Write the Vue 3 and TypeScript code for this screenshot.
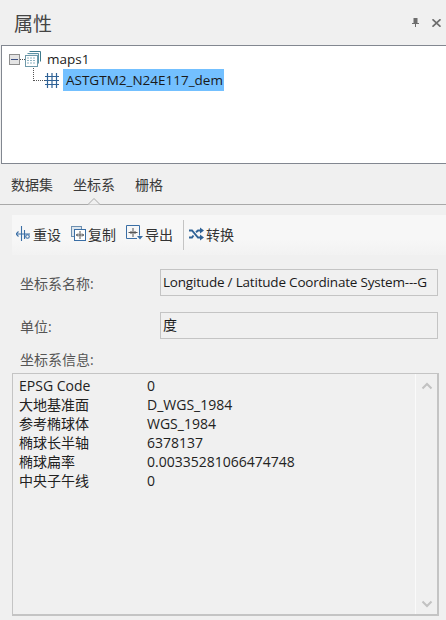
<template>
  <div class="panel">
    <header class="title-bar">
      <h1>属性</h1>
      <div class="window-tools">
        <svg width="7" height="9" viewBox="0 0 7 9" aria-label="固定">
          <path d="M1.500 0h4v5.500h-4z" fill="#6d6d6d" />
          <path d="M0 5.500h7" stroke="#6d6d6d" />
          <path d="M3.500 6v3" stroke="#6d6d6d" />
        </svg>
        <svg width="9" height="8" viewBox="0 0 9 8" aria-label="关闭">
          <path d="M.5 .3l8 7.400M8.500 .3l-8 7.400" stroke="#6d6d6d" stroke-width="1.700" fill="none" />
        </svg>
      </div>
    </header>

    <section class="tree">
      <div class="tree-root">
        <span class="collapse"><i></i></span>
        <span class="dots-h"></span>
        <svg class="map-icon" width="16" height="16" viewBox="0 0 16 16">
          <path d="M4.500 .5h11v10" fill="none" stroke="#3f7a8c" />
          <path d="M2.500 2.500h11v10" fill="#e8f1f4" stroke="#5b93a6" />
          <rect x=".5" y="4.500" width="12" height="11" fill="#fff" stroke="#6f9aaa" />
          <path d="M2 7h9M2 9.500h9M2 12h9" stroke="#8fb4c2" stroke-dasharray="2 1" />
        </svg>
        <span class="root-name">maps1</span>
      </div>
      <div class="tree-child">
        <span class="dots-l"></span>
        <svg width="14" height="15" viewBox="0 0 14 15">
          <path d="M0 3.500h14M0 7.500h14M0 11.500h14M2.500 0v15M7 0v15M11.500 0v15" stroke="#2f6296" stroke-width="1.200" />
        </svg>
        <span class="selected">ASTGTM2_N24E117_dem</span>
      </div>
    </section>

    <nav class="tabs">
      <a v-for="tab in tabs" :key="tab" class="tab">{{ tab }}</a>
      <svg class="tab-notch" width="14" height="8" viewBox="0 0 14 8">
        <path d="M0 7.500h1l6-6 6 6h1" fill="#f0f0f0" stroke="#a9a9a9" />
      </svg>
    </nav>

    <div class="toolbar">
      <button type="button" class="tool">
        <svg width="15" height="16" viewBox="0 0 15 16" fill="none" stroke="#3a6ea5" stroke-width="1.100">
          <path d="M5.500 0v15M8.500 4v9M0 8h14" />
          <path d="M0 8l2.500-2.500M0 8l2.500 2.500" />
          <circle cx="11.500" cy="10.500" r="1.800" />
        </svg>
        重设
      </button>
      <button type="button" class="tool">
        <svg width="15" height="15" viewBox="0 0 15 15" fill="none">
          <rect x=".5" y=".5" width="10" height="10" fill="#dde6ee" stroke="#6d8fb0" />
          <rect x="3.500" y="3.500" width="11" height="11" fill="#fff" stroke="#3a6ea5" />
          <path d="M9 5v8M5 9h8" stroke="#555" />
          <path d="M7 7.500l-1.500 1.500 1.500 1.500M11 7.500l1.500 1.500-1.500 1.500" stroke="#555" />
        </svg>
        复制
      </button>
      <button type="button" class="tool">
        <svg width="17" height="17" viewBox="0 0 17 17" fill="none">
          <path d="M11 13.500H.5V.5h13v10" stroke="#3a6ea5" />
          <path d="M7 3v9M2.500 7.500h9" stroke="#555" />
          <path d="M5.500 6l-1.500 1.500 1.500 1.500M8.500 6l1.500 1.500-1.500 1.500" stroke="#555" />
          <path d="M11 11h6l-3 3.500z" fill="#3a6ea5" />
        </svg>
        导出
      </button>
      <span class="tool-sep"></span>
      <button type="button" class="tool">
        <svg width="15" height="14" viewBox="0 0 15 14" fill="none" stroke="#2f6296" stroke-width="1.900">
          <path d="M0 3.500h3l6 7h3M0 10.500h3l1.500-2M7 5.200l2-1.700h3" />
          <path d="M11 .5l4 3-4 3zM11 7.500l4 3-4 3z" fill="#2f6296" stroke="none" />
        </svg>
        转换
      </button>
    </div>

    <div class="field">
      <label>坐标系名称:</label>
      <div class="field-box">Longitude / Latitude Coordinate System---G</div>
    </div>
    <div class="field unit">
      <label>单位:</label>
      <div class="field-box">度</div>
    </div>

    <div class="info-label">坐标系信息:</div>
    <section class="info">
      <div class="info-rows">
        <div v-for="row in rows" :key="row.name" class="info-row">
          <span>{{ row.name }}</span>
          <span>{{ row.value }}</span>
        </div>
      </div>
      <div class="scrollbar">
        <svg width="12" height="8" viewBox="0 0 12 8">
          <path d="M1.500 6.500L6 2l4.500 4.500" fill="none" stroke="#c2c2c2" stroke-width="2" />
        </svg>
        <svg width="12" height="8" viewBox="0 0 12 8">
          <path d="M1.500 1.500L6 6l4.500-4.500" fill="none" stroke="#c2c2c2" stroke-width="2" />
        </svg>
      </div>
    </section>
  </div>
</template>

<script setup lang="ts">
const tabs = ["数据集", "坐标系", "栅格"];

const rows = [
  { name: "EPSG Code", value: "0" },
  { name: "大地基准面", value: "D_WGS_1984" },
  { name: "参考椭球体", value: "WGS_1984" },
  { name: "椭球长半轴", value: "6378137" },
  { name: "椭球扁率", value: "0.00335281066474748" },
  { name: "中央子午线", value: "0" },
];
</script>

<style>
html,
body {
  margin: 0;
  background: #f0f0f0;
}
</style>

<style scoped>
.panel {
  width: 446px;
  height: 620px;
  overflow: hidden;
  background: #f0f0f0;
  color: #1a1a1a;
  font-family: "Open Sans", "Noto Sans CJK SC", sans-serif;
  font-size: 14px;
  box-sizing: border-box;
}

.title-bar {
  height: 45px;
  display: flex;
  align-items: center;
  justify-content: space-between;
  padding: 0 5px 0 14px;
  box-sizing: border-box;
}

h1 {
  margin: 0;
  font-size: 19px;
  font-weight: 400;
  color: #444;
}

.window-tools {
  display: flex;
  align-items: center;
  gap: 13px;
}

.tree {
  height: 119px;
  margin-left: 1px;
  border: 1px solid #828790;
  border-right: 0;
  background: #fff;
  padding: 3px 0 0 7px;
  box-sizing: border-box;
  font-size: 13.5px;
}

.tree-root {
  display: flex;
  align-items: center;
  height: 20px;
}

.tree-child {
  display: flex;
  align-items: center;
  height: 22px;
  padding-left: 36px;
  position: relative;
}

.collapse {
  width: 11px;
  height: 11px;
  border: 1px solid #8e8e8e;
  background: #e4e4e4;
  display: flex;
  align-items: center;
  justify-content: center;
  box-sizing: border-box;
}

.collapse i {
  width: 7px;
  height: 1px;
  background: #3b4f82;
}

.dots-h {
  width: 5px;
  border-top: 1px dotted #555;
}

.root-name {
  margin-left: 6px;
}

.dots-l {
  position: absolute;
  left: 24px;
  top: -1px;
  width: 11px;
  height: 12px;
  border-left: 1px dotted #555;
  border-bottom: 1px dotted #555;
}

.selected {
  margin-left: 4px;
  padding: 0 1px 0 3px;
  height: 22px;
  line-height: 22px;
  background: #73c0ff;
}

.tabs {
  position: relative;
  height: 41px;
  display: flex;
  align-items: center;
  gap: 20px;
  padding: 0 11px 1px;
  border-bottom: 1px solid #a9a9a9;
  box-sizing: border-box;
}

.tab {
  color: #3a3a3a;
}

.tab-notch {
  position: absolute;
  left: 87px;
  bottom: -1px;
}

.toolbar {
  height: 40px;
  margin: 10px 0 14px 12px;
  display: flex;
  align-items: center;
  padding: 0 0 3px 4px;
  background: linear-gradient(#f7f7f7, #f7f7f7 60%, #f2f2f2);
  box-sizing: border-box;
}

.tool {
  display: flex;
  align-items: center;
  gap: 2px;
  border: 0;
  padding: 0;
  margin-right: 10px;
  background: none;
  color: #333;
  font: inherit;
}

.tool-sep {
  width: 1px;
  height: 30px;
  background: #c4c4c4;
  margin: 3px 5px 0 0;
}

.field {
  display: flex;
  align-items: center;
  height: 27px;
  padding-left: 20px;
}

.field.unit {
  margin-top: 16px;
}

.field label {
  width: 140px;
  color: #555;
}

.field-box {
  width: 278px;
  height: 27px;
  line-height: 24px;
  padding-left: 2px;
  border: 1px solid #c4c4c4;
  background: #f0f0f0;
  font-size: 13.5px;
  letter-spacing: -0.2px;
  white-space: nowrap;
  overflow: hidden;
  box-sizing: border-box;
}

.field.unit .field-box {
  font-size: 14px;
  letter-spacing: 0;
}

.info-label {
  margin: 11px 0 0 20px;
  height: 23px;
  line-height: 20px;
  color: #555;
}

.info {
  width: 427px;
  height: 243px;
  margin-left: 12px;
  display: flex;
  border: 1px solid #c4c4c4;
  border-right-width: 2px;
  border-bottom-width: 2px;
  box-sizing: border-box;
}

.info-rows {
  flex: 1;
  padding: 2px 0 0 6px;
}

.info-row {
  display: grid;
  grid-template-columns: 128px 1fr;
  height: 19px;
  line-height: 19px;
  color: #222;
}

.scrollbar {
  width: 22px;
  border-left: 1px solid #fafafa;
  display: flex;
  flex-direction: column;
  align-items: center;
  justify-content: space-between;
  padding: 8px 0 6px;
  box-sizing: border-box;
}
</style>
